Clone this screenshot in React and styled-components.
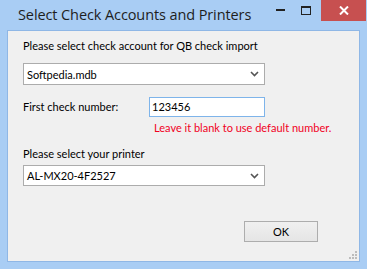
import React from 'react';
import styled, { createGlobalStyle } from 'styled-components';

const GlobalStyle = createGlobalStyle`
  html, body {
    margin: 0;
    padding: 0;
    background: #a9cdf4;
  }
`;

function Chevron() {
  return (
    <svg width="9" height="6" viewBox="0 0 9 6">
      <path d="M1 1 L4.5 4.5 L8 1" stroke="#555" strokeWidth="1.6" fill="none" />
    </svg>
  );
}

function Grip() {
  const dots = [
    [8, 0], [5, 3], [8, 3], [2, 6], [5, 6], [8, 6],
  ];
  return (
    <svg width="10" height="8" viewBox="0 0 10 8">
      {dots.map(([x, y]) => (
        <rect key={`${x}-${y}`} x={x} y={y} width="2" height="2" fill="#bcbcbc" />
      ))}
    </svg>
  );
}

function App() {
  return (
    <Window>
      <GlobalStyle />
      <TitleBar>
        <Title>Select Check Accounts and Printers</Title>
        <Controls>
          <CtrlButton>
            <svg width="9" height="3"><rect x="0" y="0" width="9" height="2" fill="#222" /></svg>
          </CtrlButton>
          <CtrlButton>
            <svg width="10" height="9"><rect x="0.5" y="0.5" width="9" height="8" fill="none" stroke="#222" /><rect x="0" y="0" width="10" height="2" fill="#222" /></svg>
          </CtrlButton>
          <CloseButton>
            <svg width="10" height="9" viewBox="0 0 10 9">
              <path d="M1 0.5 L9 8.5 M9 0.5 L1 8.5" stroke="#fff" strokeWidth="2" />
            </svg>
          </CloseButton>
        </Controls>
      </TitleBar>
      <Client>
        <Label>Please select check account for QB check import</Label>
        <Combo $top={10} $h={22}>
          <span>Softpedia.mdb</span>
          <Chevron />
        </Combo>
        <NumberRow>
          <Label>First check number:</Label>
          <TextBox>123456</TextBox>
        </NumberRow>
        <Hint>Leave it blank to use default number.</Hint>
        <Label $top={12}>Please select your printer</Label>
        <Combo $top={4} $h={21}>
          <span>AL-MX20-4F2527</span>
          <Chevron />
        </Combo>
        <Footer>
          <OkButton>OK</OkButton>
        </Footer>
        <GripBox>
          <Grip />
        </GripBox>
      </Client>
    </Window>
  );
}

const Window = styled.div`
  width: 367px;
  height: 269px;
  background: #a9cdf4;
  display: flex;
  flex-direction: column;
  box-sizing: border-box;
  padding: 0 7px 7px 7px;
  font-family: Lato, "Liberation Sans", sans-serif;
`;

const TitleBar = styled.div`
  height: 30px;
  display: flex;
  align-items: flex-start;
  justify-content: space-between;
`;

const Title = styled.div`
  font-family: "Open Sans", "Noto Sans", sans-serif;
  font-size: 14.5px;
  color: #1e1e1e;
  padding: 5px 0 0 11px;
  letter-spacing: -0.1px;
`;

const Controls = styled.div`
  display: flex;
  align-items: flex-start;
  margin-right: -6px;
`;

const CtrlButton = styled.div`
  width: 26px;
  height: 21px;
  display: flex;
  align-items: center;
  justify-content: center;
`;

const CloseButton = styled.div`
  width: 45px;
  height: 21px;
  margin-left: 2px;
  background: #c75050;
  display: flex;
  align-items: center;
  justify-content: center;
`;

const Client = styled.div`
  position: relative;
  flex: 1;
  background: #f0f0f0;
  border: 1px solid #8fb7e6;
  padding: 8px 0 0 15px;
  display: flex;
  flex-direction: column;
  align-items: flex-start;
  font-size: 11px;
  color: #000;
`;

const Label = styled.div`
  margin-top: ${(p) => p.$top || 0}px;
  line-height: 14px;
`;

const Combo = styled.div`
  margin-top: ${(p) => p.$top}px;
  width: 242px;
  height: ${(p) => p.$h}px;
  box-sizing: border-box;
  background: #fff;
  border: 1px solid #acacac;
  display: flex;
  align-items: center;
  justify-content: space-between;
  padding: 0 5px 0 3px;
`;

const NumberRow = styled.div`
  margin-top: 12px;
  display: flex;
  align-items: center;
  width: 242px;
`;

const TextBox = styled.div`
  flex: 0 0 auto;
  width: 116px;
  height: 20px;
  box-sizing: border-box;
  background: #fff;
  border: 1px solid #7eb4ea;
  padding: 0 2px;
  line-height: 18px;
  margin-left: auto;
`;

const Hint = styled.div`
  margin: 4px 0 0 131px;
  color: #f0001e;
  line-height: 14px;
  white-space: nowrap;
`;

const Footer = styled.div`
  align-self: stretch;
  display: flex;
  justify-content: flex-end;
  padding-right: 41px;
  margin-top: 35px;
`;

const OkButton = styled.div`
  width: 74px;
  height: 21px;
  box-sizing: border-box;
  border: 1px solid #adadad;
  background: linear-gradient(#f0f0f0, #e5e5e5);
  display: flex;
  align-items: center;
  justify-content: center;
`;

const GripBox = styled.div`
  position: absolute;
  right: 2px;
  bottom: 2px;
  display: flex;
`;

export default App;
